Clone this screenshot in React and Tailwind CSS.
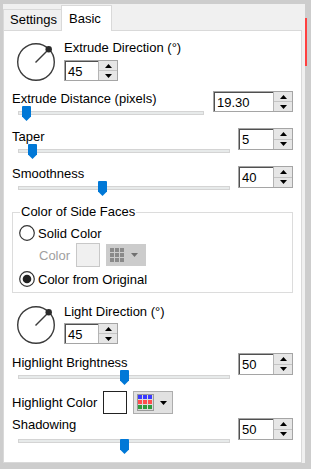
import React from "react";

const font = { fontFamily: '"Liberation Sans", Arial, sans-serif' };

function Dial() {
  return (
    <svg width="40" height="40" viewBox="0 0 40 40">
      <circle cx="20" cy="20" r="18.3" fill="none" stroke="#3c3c3c" strokeWidth="1.4" />
      <line x1="19.5" y1="20.5" x2="32.5" y2="7.5" stroke="#3c3c3c" strokeWidth="1.5" />
      <circle cx="32.7" cy="7.3" r="3.2" fill="#2a2a2a" />
    </svg>
  );
}

function Spin({ value, box }) {
  return (
    <div className={"flex border border-[#a5a5a5] bg-white " + box}>
      <div className="flex-1 flex items-center border-l border-t border-[#505050] pl-[2px] text-[13px] leading-none text-black">
        {value}
      </div>
      <div className="w-[19px] flex flex-col border-l border-[#b4b4b4] bg-[#e6e6e6]">
        <div className="flex-1 flex items-center justify-center border-b border-[#c4c4c4]">
          <svg width="7" height="4" viewBox="0 0 7 4">
            <path d="M3.5 0 L7 4 L0 4 Z" fill="#000" />
          </svg>
        </div>
        <div className="flex-1 flex items-center justify-center">
          <svg width="7" height="4" viewBox="0 0 7 4">
            <path d="M0 0 L7 0 L3.5 4 Z" fill="#000" />
          </svg>
        </div>
      </div>
    </div>
  );
}

function Slider({ track, pos }) {
  return (
    <div className={"relative h-[15px] ml-[6px] " + track}>
      <div className="mt-[5px] h-[4px] w-full bg-[#e7eaea] border border-[#d4d4d4]" />
      <svg
        className="absolute top-0"
        style={{ left: pos }}
        width="9"
        height="15"
        viewBox="0 0 9 15"
      >
        <path d="M1 0 H8 Q9 0 9 1 V10.5 L4.5 15 L0 10.5 V1 Q0 0 1 0 Z" fill="#0078d7" />
      </svg>
    </div>
  );
}

function GridIcon() {
  const cells = [];
  for (let r = 0; r < 3; r++)
    for (let c = 0; c < 3; c++)
      cells.push(<rect key={r + "-" + c} x={c * 5} y={r * 5} width="4" height="4" fill="#8a8a8a" />);
  return (
    <svg width="14" height="14" viewBox="0 0 14 14">
      {cells}
    </svg>
  );
}

function ColorIcon() {
  const colors = ["#3a3aff", "#ff4d4d", "#2f9a3d"];
  const cells = [];
  for (let r = 0; r < 3; r++)
    for (let c = 0; c < 3; c++)
      cells.push(<rect key={r + "-" + c} x={1 + c * 5} y={1 + r * 5} width="4" height="4" fill={colors[r]} />);
  return (
    <svg width="17" height="17" viewBox="0 0 17 17">
      <rect x="0.5" y="0.5" width="16" height="16" fill="#dcdcdc" stroke="#9a9a9a" />
      {cells}
    </svg>
  );
}

function Radio({ checked }) {
  return (
    <svg width="16" height="16" viewBox="0 0 16 16">
      <circle cx="8" cy="8" r="7.3" fill="#fff" stroke="#333" strokeWidth="1.2" />
      {checked ? <circle cx="8" cy="8" r="4.3" fill="#222" /> : null}
    </svg>
  );
}

export default function App() {
  return (
    <div className="w-[311px] h-[469px] bg-[#cdcdcd] flex items-start pl-[3px] pt-[4px] overflow-hidden" style={font}>
      <div className="w-[302px] h-[459px] bg-[#f0f0f0] flex flex-col">
        {/* tabs */}
        <div className="h-[26px] flex items-end">
          <div className="h-[21px] w-[58px] border-t border-l border-[#d9d9d9] bg-[#f0f0f0] text-[13px] leading-[19px] pl-[6px] text-black">
            Settings
          </div>
          <div className="relative z-10 -mb-px h-[26px] w-[51px] border-t border-l border-r border-[#d9d9d9] bg-white text-[13px] leading-[15px] pt-[5px] pl-[7px] text-black">
            Basic
          </div>
        </div>
        {/* panel */}
        <div className="w-[299px] h-[433px] bg-white border border-[#d9d9d9] flex flex-col px-[8px]">
          {/* Extrude direction */}
          <div className="flex mt-[9px]">
            <div className="ml-[4px] mt-[2px]">
              <Dial />
            </div>
            <div className="ml-[8px] flex flex-col">
              <div className="h-[15px] leading-[15px] text-[13px] text-black whitespace-nowrap">Extrude Direction (°)</div>
              <div className="mt-[5px]">
                <Spin value="45" box="w-[54px] h-[21px]" />
              </div>
            </div>
          </div>

          <div className="mt-[9px] flex justify-between items-start">
            <div className="flex flex-col">
              <div className="h-[15px] leading-[15px] text-[13px] text-black whitespace-nowrap">Extrude Distance (pixels)</div>
              <Slider track="w-[186px]" pos={4} />
            </div>
            <Spin value="19.30" box="w-[80px] h-[21px]" />
          </div>

          <div className="mt-[7px] flex justify-between items-start">
            <div className="flex flex-col">
              <div className="mt-[1px] h-[15px] leading-[15px] text-[13px] text-black">Taper</div>
              <Slider track="w-[212px]" pos={10} />
            </div>
            <Spin value="5" box="w-[55px] h-[22px]" />
          </div>

          <div className="mt-[7px] flex justify-between items-start">
            <div className="flex flex-col">
              <div className="h-[15px] leading-[15px] text-[13px] text-black">Smoothness</div>
              <Slider track="w-[212px]" pos={80} />
            </div>
            <Spin value="40" box="w-[55px] h-[22px]" />
          </div>

          {/* group */}
          <div className="relative mt-[16px] h-[81px] border border-[#dcdcdc] pt-[12px] pl-[6px]">
            <div className="absolute -top-[9px] left-[7px] bg-white px-[1px] h-[15px] leading-[15px] text-[13px] text-black">
              Color of Side Faces
            </div>
            <div className="flex items-center h-[16px]">
              <Radio checked={false} />
              <span className="ml-[3px] text-[13px] leading-[15px] text-black">Solid Color</span>
            </div>
            <div className="flex items-center h-[24px] mt-[2px] pl-[20px]">
              <span className="text-[13px] leading-[15px] text-[#a0a0a0]">Color</span>
              <div className="ml-[6px] w-[24px] h-[24px] border border-[#c8c8c8] bg-[#f0f0f0]" />
              <div className="ml-[6px] w-[40px] h-[22px] bg-[#cccccc] flex items-center pl-[4px]">
                <GridIcon />
                <svg className="ml-[7px]" width="7" height="4" viewBox="0 0 7 4">
                  <path d="M0 0 L7 0 L3.5 4 Z" fill="#707070" />
                </svg>
              </div>
            </div>
            <div className="flex items-center h-[16px] mt-[4px]">
              <Radio checked={true} />
              <span className="ml-[3px] text-[13px] leading-[15px] text-black">Color from Original</span>
            </div>
          </div>

          {/* Light direction */}
          <div className="flex mt-[11px]">
            <div className="ml-[4px] mt-[1px]">
              <Dial />
            </div>
            <div className="ml-[8px] flex flex-col">
              <div className="h-[15px] leading-[15px] text-[13px] text-black whitespace-nowrap">Light Direction (°)</div>
              <div className="mt-[4px]">
                <Spin value="45" box="w-[54px] h-[21px]" />
              </div>
            </div>
          </div>

          <div className="mt-[8px] flex justify-between items-start">
            <div className="flex flex-col">
              <div className="mt-[2px] h-[15px] leading-[15px] text-[13px] text-black">Highlight Brightness</div>
              <Slider track="w-[212px]" pos={102} />
            </div>
            <Spin value="50" box="w-[55px] h-[22px]" />
          </div>

          <div className="mt-[6px] flex items-center h-[23px]">
            <span className="text-[13px] leading-[15px] text-black">Highlight Color</span>
            <div className="ml-[6px] w-[24px] h-[23px] border border-[#222] bg-white" />
            <div className="ml-[6px] w-[40px] h-[23px] bg-[#e1e1e1] border border-[#adadad] flex items-center pl-[3px]">
              <ColorIcon />
              <svg className="ml-[6px]" width="7" height="4" viewBox="0 0 7 4">
                <path d="M0 0 L7 0 L3.5 4 Z" fill="#000" />
              </svg>
            </div>
          </div>

          <div className="mt-[3px] flex justify-between items-start">
            <div className="flex flex-col">
              <div className="h-[15px] leading-[15px] text-[13px] text-black">Shadowing</div>
              <div className="mt-[2px]">
                <Slider track="w-[212px]" pos={102} />
              </div>
            </div>
            <div className="mt-[1px]">
              <Spin value="50" box="w-[55px] h-[22px]" />
            </div>
          </div>
        </div>
      </div>
      <div className="w-[2px] h-[48px] mt-[14px] bg-[#ff4040]" />
    </div>
  );
}
